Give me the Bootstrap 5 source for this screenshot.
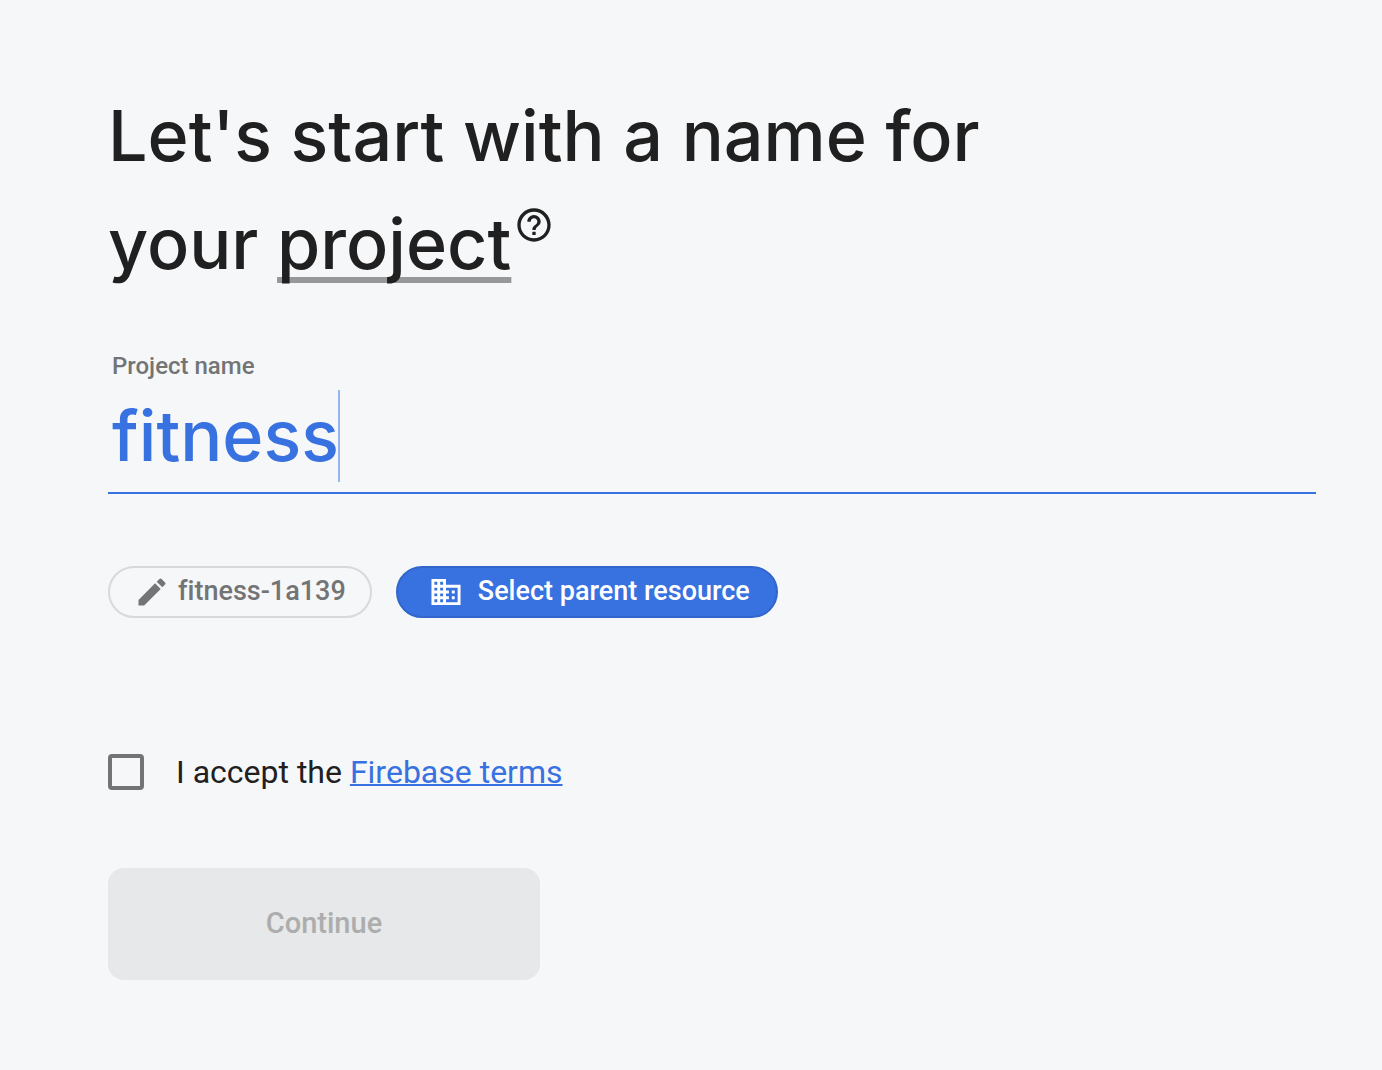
<!DOCTYPE html>
<html lang="en">
<head>
<meta charset="utf-8">
<meta name="viewport" content="width=device-width, initial-scale=1">
<title>Create a project</title>
<link href="https://cdn.jsdelivr.net/npm/bootstrap@5.3.0/dist/css/bootstrap.min.css" rel="stylesheet">
<style>
  body { background: #f6f7f9; color: #202020; font-family: Roboto, "Liberation Sans", sans-serif; }
  .setup { padding: 82px 66px 90px 108px; }
  .setup-title { max-width: 960px; margin-bottom: 54px; font: 500 70px/108px Inter, Lato, sans-serif; }
  .term { text-decoration: underline #98989a 6px; text-underline-offset: 8px; text-decoration-skip-ink: none; }
  .help-btn { width: 40px; height: 40px; margin: -20px 0 0 3px; vertical-align: 40px; color: inherit; line-height: 0; }
  .field-label { padding-left: 4px; font-size: 24px; line-height: 28px; font-weight: 500; color: #737475; }
  .name-input { height: 114px; padding: 0 4px 2px; border: 0; border-bottom: 2px solid #3871e0; border-radius: 0; background: transparent; color: #3871e0; font: 500 70px/92px Inter, Lato, sans-serif; }
  .name-input:focus { background: transparent; color: #3871e0; box-shadow: none; border-color: #3871e0; }
  .caret { position: absolute; left: 230px; top: 10px; width: 2px; height: 92px; background: #97b4ec; }
  .chips { gap: 24px; margin-top: 72px; }
  .chip { height: 52px; padding: 0 24px 2px; border: 2px solid #d8d9da; border-radius: 26px; background: transparent; color: #737475; font-size: 27px; line-height: 32px; font-weight: 500; font-variant-ligatures: none; }
  .chip-primary { padding: 0 26px 2px 32px; border-color: #3366cb; background: #3871e0; color: #fff; }
  .chip svg { margin-top: 2px; }
  .terms { gap: 32px; margin-top: 130px; min-height: 48px; font-size: 32px; line-height: 48px; }
  .terms .form-check-input { width: 36px; height: 36px; border: 4px solid #737475; border-radius: 4px; background-color: transparent; }
  .terms a { color: #3871e0; text-decoration-thickness: 2px; }
  .continue-btn { width: 432px; max-width: 100%; height: 112px; margin-top: 72px; border: 0; border-radius: 16px; background: #e7e8ea; color: #adadae; font-size: 29px; font-weight: 500; }
  .continue-btn:disabled { background: #e7e8ea; color: #adadae; opacity: 1; }
</style>
</head>
<body>
<main class="setup">
  <form>
    <h1 class="setup-title">Let's start with a name for your <span class="term">project</span><button type="button" class="help-btn btn p-0 border-0" aria-label="What is a project?"><svg width="40" height="40" viewBox="0 0 24 24" fill="currentColor" aria-hidden="true"><path d="M11 18h2v-2h-2v2zm1-16C6.48 2 2 6.480 2 12s4.480 10 10 10 10-4.480 10-10S17.520 2 12 2zm0 18c-4.410 0-8-3.590-8-8s3.590-8 8-8 8 3.590 8 8-3.590 8-8 8zm0-14c-2.210 0-4 1.790-4 4h2c0-1.100.9-2 2-2s2 .9 2 2c0 2-3 1.750-3 5h2c0-2.250 3-2.500 3-5 0-2.210-1.790-4-4-4z"/></svg></button></h1>
    <label class="field-label d-block" for="projectName">Project name</label>
    <div class="position-relative">
      <input id="projectName" class="name-input form-control" type="text" value="fitness" autocomplete="off" spellcheck="false">
      <span class="caret" aria-hidden="true"></span>
    </div>
    <div class="chips d-flex flex-wrap">
      <button type="button" class="chip d-inline-flex align-items-center gap-2"><svg width="36" height="36" viewBox="0 0 24 24" fill="currentColor" aria-hidden="true"><path d="M3 17.250V21h3.750L17.810 9.940l-3.750-3.750L3 17.250zM20.710 7.040a1 1 0 0 0 0-1.410l-2.340-2.340a1 1 0 0 0-1.410 0l-1.830 1.830 3.750 3.750 1.830-1.830z"/></svg>fitness-1a139</button>
      <button type="button" class="chip chip-primary d-inline-flex align-items-center gap-3"><svg width="32" height="36" viewBox="1 0 22 24" fill="currentColor" aria-hidden="true"><path d="M12 7V3H2v18h20V7H12zM6 19H4v-2h2v2zm0-4H4v-2h2v2zm0-4H4V9h2v2zm0-4H4V5h2v2zm4 12H8v-2h2v2zm0-4H8v-2h2v2zm0-4H8V9h2v2zm0-4H8V5h2v2zm10 12h-8v-2h2v-2h-2v-2h2v-2h-2V9h8v10zm-2-8h-2v2h2v-2zm0 4h-2v2h2v-2z"/></svg>Select parent resource</button>
    </div>
    <div class="terms d-flex align-items-center">
      <input id="acceptTerms" class="form-check-input m-0 flex-shrink-0" type="checkbox">
      <label for="acceptTerms">I accept the <a href="#terms">Firebase terms</a></label>
    </div>
    <button type="submit" class="continue-btn btn" disabled>Continue</button>
  </form>
</main>
<script src="https://cdn.jsdelivr.net/npm/bootstrap@5.3.0/dist/js/bootstrap.bundle.min.js"></script>
</body>
</html>
